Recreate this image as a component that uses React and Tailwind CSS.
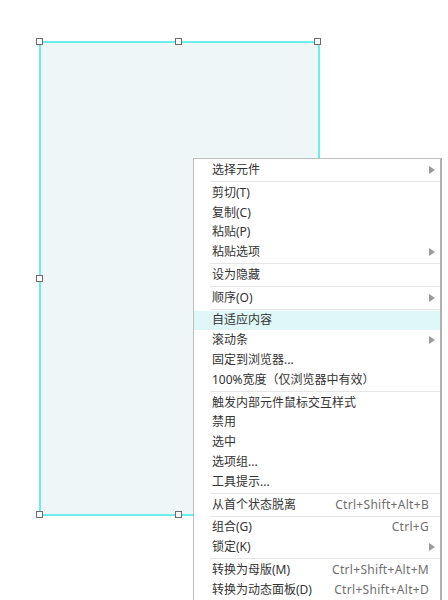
import React from "react";

const items = [
  { label: "选择元件", sub: true },
  "sep",
  { label: "剪切(T)" },
  { label: "复制(C)" },
  { label: "粘贴(P)" },
  { label: "粘贴选项", sub: true },
  "sep",
  { label: "设为隐藏" },
  "sep",
  { label: "顺序(O)", sub: true },
  "sep",
  { label: "自适应内容", active: true },
  { label: "滚动条", sub: true },
  { label: "固定到浏览器..." },
  { label: "100%宽度（仅浏览器中有效）" },
  "sep",
  { label: "触发内部元件鼠标交互样式" },
  { label: "禁用" },
  { label: "选中" },
  { label: "选项组..." },
  { label: "工具提示..." },
  "sep",
  { label: "从首个状态脱离", key: "Ctrl+Shift+Alt+B" },
  "sep",
  { label: "组合(G)", key: "Ctrl+G" },
  { label: "锁定(K)", sub: true },
  "sep",
  { label: "转换为母版(M)", key: "Ctrl+Shift+Alt+M" },
  { label: "转换为动态面板(D)", key: "Ctrl+Shift+Alt+D" },
];

const Handle = ({ className }) => (
  <div
    className={`absolute w-[7px] h-[7px] bg-white border border-[#6b6b6b] ${className}`}
  />
);

const Arrow = () => (
  <svg width="6" height="8" viewBox="0 0 6 8" className="mr-[1px]">
    <path d="M0 0 L6 4 L0 8 Z" fill="#9a9a9a" />
  </svg>
);

export default function App() {
  return (
    <div
      className="relative w-[448px] h-[600px] overflow-hidden bg-white"
      style={{ fontFamily: '"Noto Sans", "Noto Sans CJK SC", sans-serif' }}
    >
      {/* selected shape */}
      <div className="absolute left-[39px] top-[41px] w-[281px] h-[475px] border-2 border-[#6cefec] bg-[#eef6f8]" />
      <Handle className="left-[36px] top-[38px]" />
      <Handle className="left-[175px] top-[38px]" />
      <Handle className="left-[314px] top-[38px]" />
      <Handle className="left-[36px] top-[275px]" />
      <Handle className="left-[36px] top-[511px]" />
      <Handle className="left-[175px] top-[511px]" />

      {/* context menu */}
      <div className="absolute left-[193px] top-[158px] w-[249px] pt-[1px] bg-white border border-[#bdbdbd] border-r-2 border-r-[#b0b0b0]">
        {items.map((it, i) =>
          it === "sep" ? (
            <div key={i} className="py-[1px] pl-[16px]">
              <div className="h-px bg-[#e6e6e6]" />
            </div>
          ) : (
            <div
              key={i}
              className={`flex items-center justify-between h-[19.8px] pl-[18px] pr-[4px] text-[12px] leading-[20px] text-[#333333] ${
                it.active ? "bg-[#e0f7f7]" : ""
              }`}
            >
              <span>{it.label}</span>
              {it.sub && <Arrow />}
              {it.key && (
                <span className="text-[#6f6f6f] pr-[7px] tracking-[0.3px]">
                  {it.key}
                </span>
              )}
            </div>
          )
        )}
      </div>
    </div>
  );
}
